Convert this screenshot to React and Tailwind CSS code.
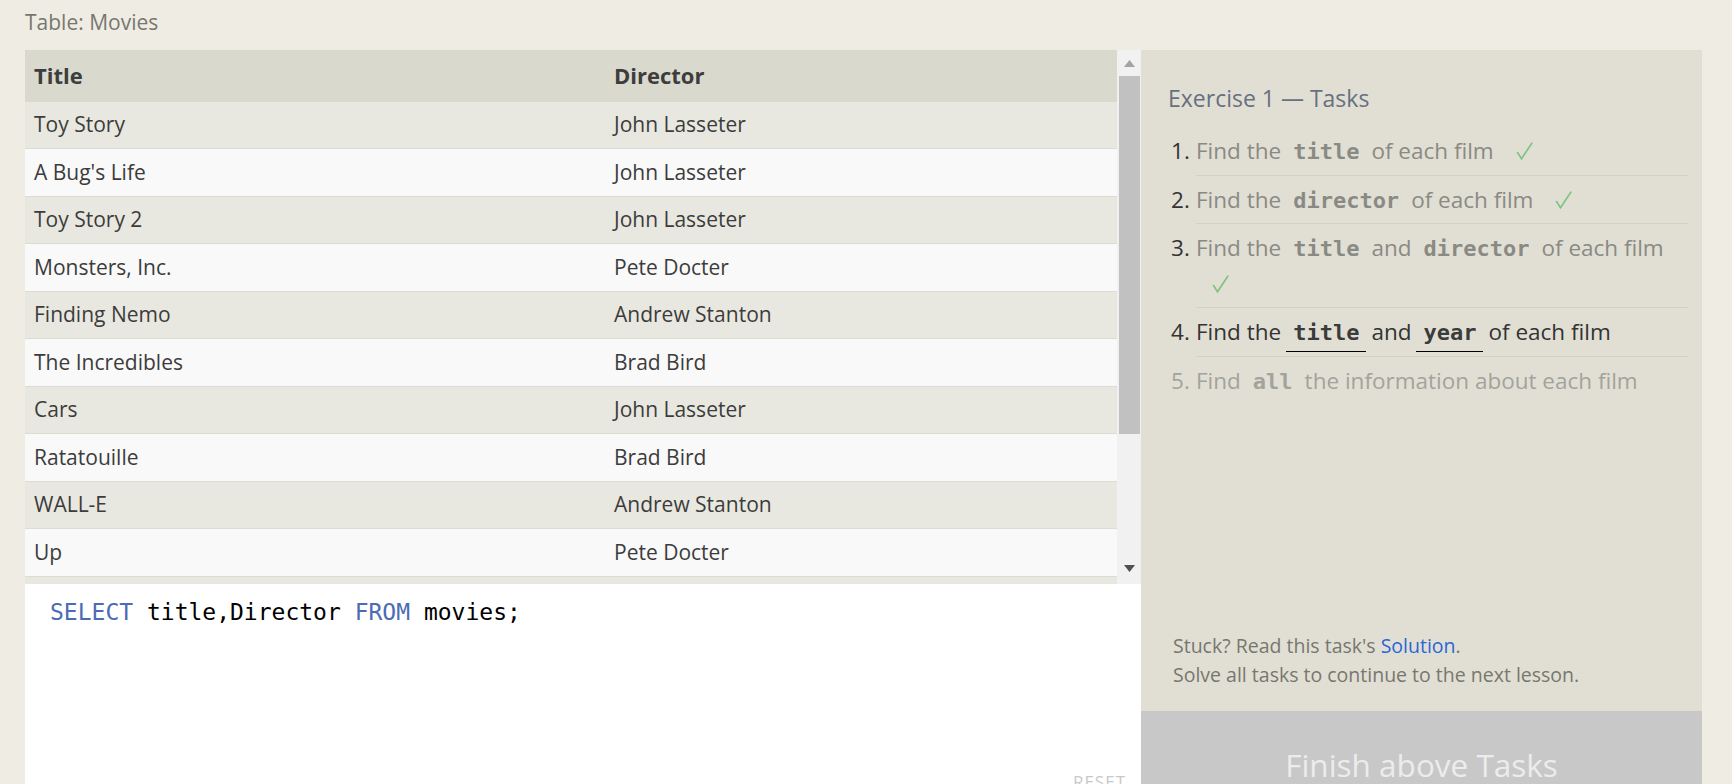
import React from "react";

const movies = [
  ["Toy Story", "John Lasseter"],
  ["A Bug's Life", "John Lasseter"],
  ["Toy Story 2", "John Lasseter"],
  ["Monsters, Inc.", "Pete Docter"],
  ["Finding Nemo", "Andrew Stanton"],
  ["The Incredibles", "Brad Bird"],
  ["Cars", "John Lasseter"],
  ["Ratatouille", "Brad Bird"],
  ["WALL-E", "Andrew Stanton"],
  ["Up", "Pete Docter"],
];

const Code = ({ children, active }) => (
  <code
    className={`font-['DejaVu_Sans_Mono',monospace] font-bold text-[22px] leading-none px-[7px] mx-[5px] ${
      active ? "text-[#3b3b3b] border-b border-black pb-[6px]" : ""
    }`}
  >
    {children}
  </code>
);

// thin green tick drawn to match the reference glyph
const Check = () => (
  <svg
    width="17"
    height="18"
    viewBox="0 0 17 18"
    className="inline-block ml-[16px] align-[-1px]"
    fill="none"
    stroke="#7cc47e"
    strokeWidth="1.6"
    strokeLinecap="round"
  >
    <path d="M1.5 10.5 L5.5 16.8 L15.8 1.2" />
  </svg>
);

const tasks = [
  {
    state: "done",
    body: (
      <>
        Find the<Code>title</Code>of each film <Check />
      </>
    ),
  },
  {
    state: "done",
    body: (
      <>
        Find the<Code>director</Code>of each film <Check />
      </>
    ),
  },
  {
    state: "done",
    body: (
      <>
        Find the<Code>title</Code>and<Code>director</Code>of each film <Check />
      </>
    ),
  },
  {
    state: "active",
    body: (
      <>
        Find the<Code active>title</Code>and<Code active>year</Code>of each film
      </>
    ),
  },
  {
    state: "todo",
    body: (
      <>
        Find<Code>all</Code>the information about each film
      </>
    ),
  },
];

export default function App() {
  return (
    <div className="w-[1732px] h-[784px] overflow-hidden bg-[#efece4] font-['Open_Sans',sans-serif]">
      <div className="h-[50px] pl-[25px] pt-[8px] text-[21px] leading-[28px] text-[#77776f]">
        Table: Movies
      </div>

      <div className="ml-[25px] flex w-[1677px] h-[734px]">
        {/* left: table + editor */}
        <div className="w-[1116px] flex flex-col">
          <div className="h-[534px] flex">
            <div className="w-[1092px] overflow-hidden bg-[#e9e8e0]">
              <div className="grid grid-cols-[580px_1fr] h-[51.5px] items-center bg-[#d9d9cd] text-[22px] font-bold text-[#3d3d3d]">
                <div className="pl-[9px]">Title</div>
                <div className="pl-[9px]">Director</div>
              </div>
              {movies.map(([title, director], i) => (
                <div
                  key={title}
                  className={`grid grid-cols-[580px_1fr] h-[47.5px] items-center border-b border-[#dcdbd4] text-[21px] text-[#3c3c3c] ${
                    i % 2 === 0 ? "bg-[#e9e8e0]" : "bg-[#f9f9f9]"
                  }`}
                >
                  <div className="pl-[9px]">{title}</div>
                  <div className="pl-[9px]">{director}</div>
                </div>
              ))}
            </div>

            {/* scrollbar */}
            <div className="w-[24px] bg-[#f1f1f1] flex flex-col items-center">
              <div className="h-[26px] flex items-center justify-center">
                <svg width="11" height="7" viewBox="0 0 11 7">
                  <polygon points="5.5,0 11,7 0,7" fill="#a3a3a3" />
                </svg>
              </div>
              <div className="w-[21px] ml-[1px] h-[358px] bg-[#c1c1c1]" />
              <div className="flex-1" />
              <div className="h-[22px] flex items-start pt-[3px] justify-center">
                <svg width="11" height="7" viewBox="0 0 11 7">
                  <polygon points="0,0 11,0 5.5,7" fill="#505050" />
                </svg>
              </div>
            </div>
          </div>

          {/* editor */}
          <div className="flex-1 bg-white relative pl-[25px] pt-[13px]">
            <div className="font-['DejaVu_Sans_Mono',monospace] text-[23px] leading-[30px] text-black">
              <span className="text-[#4b6cb5]">SELECT</span> title,Director{" "}
              <span className="text-[#4b6cb5]">FROM</span> movies;
            </div>
            <div className="absolute right-[15px] top-[185px] text-[17px] tracking-[1px] text-[#c9c9c9]">
              RESET
            </div>
          </div>
        </div>

        {/* right: tasks panel */}
        <div className="w-[561px] bg-[#e1dfd4] flex flex-col">
          <div className="pl-[27px] pr-[14px] pt-[33px]">
            <h2 className="text-[23px] leading-[30px] text-[#66707f]">Exercise 1 — Tasks</h2>
            <ol className="mt-[14px] pl-[3px]">
              {tasks.map((t, i) => (
                <li
                  key={i}
                  className={`flex text-[22.5px] leading-[35.5px] ${
                    t.state === "todo" ? "text-[#a3a39d]" : "text-[#333]"
                  }`}
                >
                  <span className="w-[25px] py-[6px] shrink-0">{i + 1}.</span>
                  <div
                    className={`flex-1 py-[6px] ${i < 4 ? "border-b border-[#d4d2c7]" : ""} ${
                      t.state === "done" ? "text-[#8a8a84]" : ""
                    }`}
                  >
                    {t.body}
                  </div>
                </li>
              ))}
            </ol>
          </div>

          <div className="mt-auto pl-[32px] pb-[22px] text-[19.5px] leading-[29px] text-[#77776f]">
            <div>
              Stuck? Read this task's <span className="text-[#2b66d6]">Solution</span>.
            </div>
            <div>Solve all tasks to continue to the next lesson.</div>
          </div>

          <div className="h-[73px] bg-[#c8c8c8] flex justify-center pt-[37px] overflow-hidden">
            <span className="text-[31.5px] leading-[34px] text-[#ececec]">Finish above Tasks</span>
          </div>
        </div>
      </div>
    </div>
  );
}
